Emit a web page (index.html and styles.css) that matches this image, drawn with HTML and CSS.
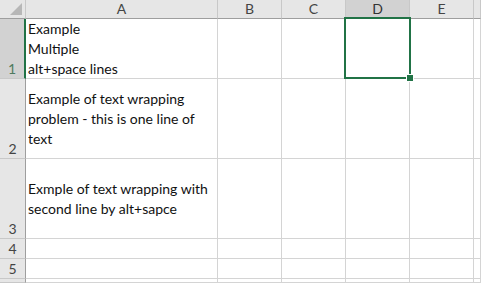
FILE: index.html
```html
<!DOCTYPE html>
<html>
<head>
<meta charset="utf-8">
<link rel="stylesheet" href="styles.css">
</head>
<body>
<div class="sheet">
  <div class="corner"><span class="tri"></span></div>
  <div class="colh">A</div>
  <div class="colh">B</div>
  <div class="colh">C</div>
  <div class="colh sel">D</div>
  <div class="colh">E</div>
  <div class="colh last"></div>

  <div class="rowh sel">1</div>
  <div class="cell txt">Example<br>Multiple<br>alt+space lines</div>
  <div class="cell"></div>
  <div class="cell"></div>
  <div class="cell"></div>
  <div class="cell"></div>
  <div class="cell"></div>

  <div class="rowh">2</div>
  <div class="cell txt">Example of text wrapping<br>problem - this is one line of<br>text</div>
  <div class="cell"></div>
  <div class="cell"></div>
  <div class="cell"></div>
  <div class="cell"></div>
  <div class="cell"></div>

  <div class="rowh">3</div>
  <div class="cell txt">Exmple of text wrapping with<br>second line by alt+sapce</div>
  <div class="cell"></div>
  <div class="cell"></div>
  <div class="cell"></div>
  <div class="cell"></div>
  <div class="cell"></div>

  <div class="rowh">4</div>
  <div class="cell"></div>
  <div class="cell"></div>
  <div class="cell"></div>
  <div class="cell"></div>
  <div class="cell"></div>
  <div class="cell"></div>

  <div class="rowh">5</div>
  <div class="cell"></div>
  <div class="cell"></div>
  <div class="cell"></div>
  <div class="cell"></div>
  <div class="cell"></div>
  <div class="cell"></div>

  <div class="rowh"></div>
  <div class="cell"></div>
  <div class="cell"></div>
  <div class="cell"></div>
  <div class="cell"></div>
  <div class="cell"></div>
  <div class="cell"></div>

  <div class="selection"><span class="handle"></span></div>
</div>
</body>
</html>
```

FILE: styles.css
```css
html, body {
  margin: 0;
  padding: 0;
  background: #ffffff;
  overflow: hidden;
}

.sheet {
  position: relative;
  display: grid;
  width: 481px;
  height: 283px;
  overflow: hidden;
  grid-template-columns: 26px 192px 64px 64px 64px 64px 7px;
  grid-template-rows: 19px 60px 80px 80px 20px 20px 4px;
  font-family: "Lato", "Liberation Sans", sans-serif;
  font-size: 14px;
  color: #111111;
}

.corner {
  position: relative;
  background: #e6e6e6;
  border-right: 1px solid #c8c8c8;
  border-bottom: 1px solid #9e9e9e;
  box-sizing: border-box;
}

.tri {
  position: absolute;
  right: 3px;
  bottom: 3px;
  width: 0;
  height: 0;
  border-left: 12px solid transparent;
  border-bottom: 12px solid #b7b7b7;
}

.colh {
  background: #e6e6e6;
  border-right: 1px solid #c8c8c8;
  border-bottom: 1px solid #9e9e9e;
  box-sizing: border-box;
  text-align: center;
  line-height: 18px;
  color: #444444;
  font-size: 14px;
}

.colh.sel {
  background: #d2d2d2;
  border-bottom: 2px solid #217346;
  color: #333333;
}

.rowh {
  background: #e6e6e6;
  border-right: 1px solid #9e9e9e;
  border-bottom: 1px solid #c8c8c8;
  box-sizing: border-box;
  display: flex;
  align-items: flex-end;
  justify-content: center;
  line-height: 18px;
  color: #444444;
  font-size: 14px;
}

.rowh.sel {
  background: #d2d2d2;
  border-right: 2px solid #217346;
  color: #4f7a5f;
}

.cell {
  border-right: 1px solid #d4d4d4;
  border-bottom: 1px solid #d4d4d4;
  box-sizing: border-box;
}

.cell.txt {
  display: flex;
  align-items: center;
  padding-left: 2px;
  line-height: 20px;
  white-space: nowrap;
}

.selection {
  position: absolute;
  left: 344px;
  top: 17px;
  width: 67px;
  height: 62px;
  border: 2px solid #217346;
  box-sizing: border-box;
}

.handle {
  position: absolute;
  right: -5px;
  bottom: -5px;
  width: 6px;
  height: 6px;
  background: #217346;
  border: 1px solid #ffffff;
}
```
